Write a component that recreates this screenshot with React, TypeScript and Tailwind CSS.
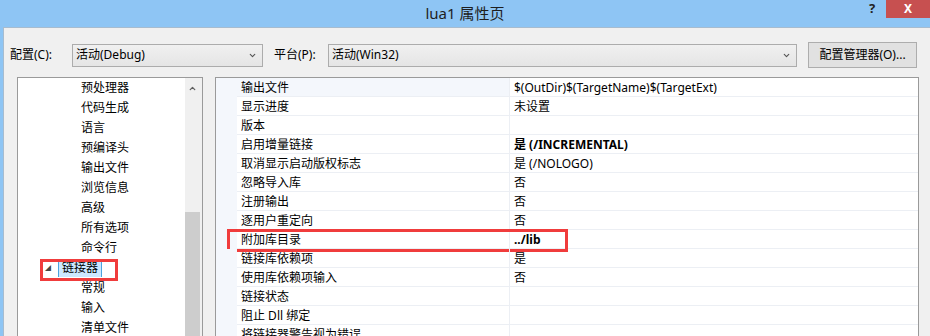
import { ChevronDown, ChevronUp } from "lucide-react";

const FONT = { fontFamily: '"Segoe UI", "Noto Sans", "Noto Sans CJK SC", sans-serif' };

const treeItems = [
  "预处理器",
  "代码生成",
  "语言",
  "预编译头",
  "输出文件",
  "浏览信息",
  "高级",
  "所有选项",
  "命令行",
  "链接器",
  "常规",
  "输入",
  "清单文件",
];

type Prop = { name: string; value: string; bold?: boolean; marked?: boolean };

const props: Prop[] = [
  { name: "输出文件", value: "$(OutDir)$(TargetName)$(TargetExt)" },
  { name: "显示进度", value: "未设置" },
  { name: "版本", value: "" },
  { name: "启用增量链接", value: "是 (/INCREMENTAL)", bold: true },
  { name: "取消显示启动版权标志", value: "是 (/NOLOGO)" },
  { name: "忽略导入库", value: "否" },
  { name: "注册输出", value: "否" },
  { name: "逐用户重定向", value: "否" },
  { name: "附加库目录", value: "../lib", bold: true, marked: true },
  { name: "链接库依赖项", value: "是" },
  { name: "使用库依赖项输入", value: "否" },
  { name: "链接状态", value: "" },
  { name: "阻止 Dll 绑定", value: "" },
  { name: "将链接器警告视为错误", value: "" },
];

function Combo({ text, width }: { text: string; width: string }) {
  return (
    <div
      className={`flex h-[23px] ${width} items-center justify-between border border-[#acacac] bg-gradient-to-b from-[#f0f0f0] to-[#e5e5e5] pl-[3px] pr-[5px] text-[12px] leading-none text-black`}
    >
      <span>{text}</span>
      <ChevronDown className="h-[9px] w-[9px] text-[#555]" strokeWidth={3} />
    </div>
  );
}

export default function App() {
  return (
    <div
      className="flex h-[336px] w-[930px] flex-col overflow-hidden bg-[#8ec5f4]"
      style={FONT}
    >
      {/* Title bar */}
      <div className="relative flex h-[27px] shrink-0 items-center justify-center">
        <span className="text-[15px] leading-none text-[#1e1e1e]">lua1 属性页</span>
        <span className="absolute left-[869px] top-[2px] text-[13px] font-bold leading-none text-[#222]">
          ?
        </span>
        <div className="absolute right-0 top-0 flex h-[18px] w-[44px] items-center justify-center bg-[#c75050] text-[12px] font-bold leading-none text-white">
          X
        </div>
      </div>

      {/* Dialog body */}
      <div className="ml-[3px] flex flex-1 flex-col border-l border-t border-[#a7bccf] bg-[#f0f0f0]">
        {/* Config row */}
        <div className="flex items-center pl-[6px] pt-[14px]">
          <span className="w-[62px] text-[12px] text-black">配置(C):</span>
          <Combo text="活动(Debug)" width="w-[191px]" />
          <span className="ml-[11px] w-[54px] text-[12px] text-black">平台(P):</span>
          <Combo text="活动(Win32)" width="w-[469px]" />
          <button className="ml-[11px] flex h-[26px] w-[109px] items-center justify-center border border-[#adadad] bg-[#e1e1e1] text-[12px] text-black">
            配置管理器(O)...
          </button>
        </div>

        {/* Panels */}
        <div className="mt-[9px] flex flex-1 gap-[12px] pl-[13px]">
          {/* Tree */}
          <div className="flex w-[186px] border-l border-r border-t border-[#9a9a9a] bg-white">
            <div className="flex flex-1 flex-col">
              {treeItems.map((t) =>
                t === "链接器" ? (
                  <div key={t} className="relative flex h-[20px] shrink-0 items-center">
                    <span className="ml-[27px] w-[13px] text-[6px] leading-none text-[#444]">◢</span>
                    <span className="flex h-[18px] items-center border-x border-[#4aa3df] bg-[#cce8ff] px-[3px] text-[12px] leading-none text-black">
                      {t}
                    </span>
                    <div className="absolute left-[22px] top-[1px] h-[22px] w-[78px] border-[3px] border-[#f03c3c]" />
                  </div>
                ) : (
                  <div
                    key={t}
                    className="flex h-[20px] shrink-0 items-center pl-[63px] text-[12px] leading-none text-black"
                  >
                    {t}
                  </div>
                ),
              )}
            </div>
            {/* Scrollbar */}
            <div className="flex w-[17px] flex-col bg-[#f0f0f0] pr-[2px]">
              <div className="flex h-[20px] items-center justify-center">
                <ChevronUp className="h-[9px] w-[9px] text-[#606060]" strokeWidth={3.5} />
              </div>
              <div className="h-[114px]" />
              <div className="flex-1 bg-[#cdcdcd]" />
            </div>
          </div>

          {/* Property grid */}
          <div className="flex w-[704px] border-l border-r border-t border-[#9a9a9a] bg-white">
            <div className="flex w-full flex-col">
              {props.map((p, i) => (
                <div key={p.name} className="relative flex h-[19px] shrink-0">
                  <div className="w-[21px] bg-[#f4f7fc]" />
                  <div
                    className={`flex w-[273px] items-center border-b border-r border-[#eceff4] pl-[4px] pt-[1px] text-[12px] leading-none text-black ${
                      i === 0 ? "bg-[#f4f7fc]" : ""
                    }`}
                  >
                    {p.name}
                  </div>
                  <div
                    className={`flex flex-1 items-center border-b border-[#eceff4] pl-[4px] pt-[1px] text-[12px] leading-none text-black ${
                      p.bold ? "font-bold" : ""
                    }`}
                  >
                    {p.value}
                  </div>
                  {p.marked && (
                    <div className="absolute left-[11px] top-[-1px] h-[23px] w-[341px] border-[3px] border-[#f03c3c]" />
                  )}
                </div>
              ))}
            </div>
          </div>
        </div>
      </div>
    </div>
  );
}
